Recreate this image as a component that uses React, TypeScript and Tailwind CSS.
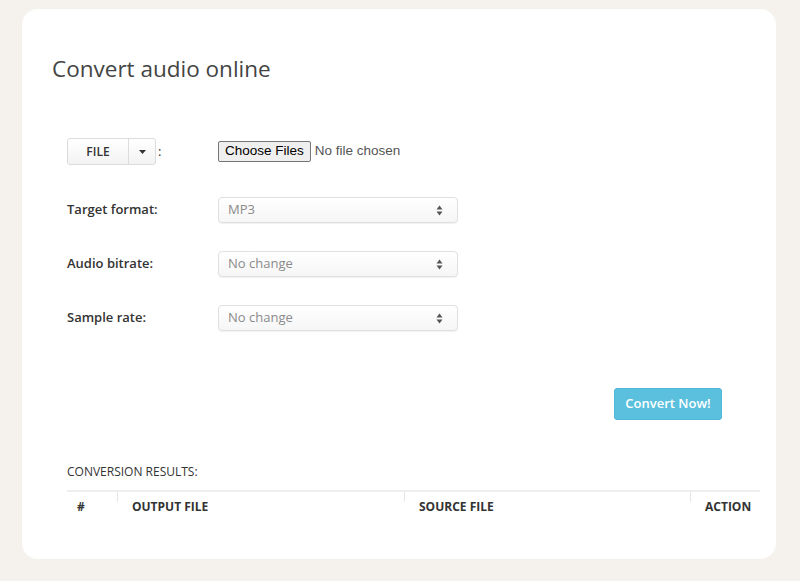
const rows = [
  { label: 'Target format:', value: 'MP3' },
  { label: 'Audio bitrate:', value: 'No change' },
  { label: 'Sample rate:', value: 'No change' },
];

function UpDown() {
  return (
    <svg width="7" height="11" viewBox="0 0 7 11" className="text-[#555]">
      <path d="M0.5 4.5 L3.5 0.5 L6.5 4.5 Z" fill="currentColor" />
      <path d="M0.5 6.5 L3.5 10.5 L6.5 6.5 Z" fill="currentColor" />
    </svg>
  );
}

export default function App() {
  return (
    <div className="min-h-[581px] w-[800px] bg-[#f5f2ee] pt-[9px] font-['Open_Sans',sans-serif]">
      <div className="ml-[22px] h-[550px] w-[754px] rounded-[16px] bg-white pt-[45px]">
        {/* Title */}
        <h1 className="pl-[30px] text-[22.5px] leading-[30px] text-[#444]">Convert audio online</h1>

        <div className="mt-[54px] pl-[45px] pr-[16px]">
          {/* File source row */}
          <div className="flex h-[27px] items-center">
            <div className="flex w-[151px] items-center">
              <div className="flex h-[27px] items-stretch rounded-[3px] border border-[#dcdcdc] bg-gradient-to-b from-white to-[#f3f3f3]">
                <span className="flex w-[60px] items-center justify-center text-[12px] font-semibold text-[#333]">FILE</span>
                <span className="flex w-[27px] items-center justify-center border-l border-[#dcdcdc]">
                  <svg width="7" height="4" viewBox="0 0 7 4">
                    <path d="M0 0 L7 0 L3.5 4 Z" fill="#333" />
                  </svg>
                </span>
              </div>
              <span className="ml-[2px] text-[13px] text-[#333]">:</span>
            </div>
            <div className="flex items-center font-['Liberation_Sans',sans-serif]">
              <span className="flex h-[21px] items-center rounded-[2px] border border-[#767676] bg-[#efefef] px-[6px] text-[13.5px] text-black">
                Choose Files
              </span>
              <span className="ml-[4px] text-[13.5px] text-[#555]">No file chosen</span>
            </div>
          </div>

          {/* Options */}
          <div className="mt-[32px] flex flex-col gap-[28px]">
            {rows.map((r) => (
              <div key={r.label} className="flex h-[26px] items-center">
                <span className="w-[151px] text-[13px] font-semibold text-[#333]">{r.label}</span>
                <div className="flex h-[26px] w-[240px] items-center justify-between rounded-[4px] border border-[#e0e0e0] bg-gradient-to-b from-white to-[#f6f6f6] pl-[9px] pr-[14px] shadow-[0_1px_1px_rgba(0,0,0,0.06)]">
                  <span className="text-[13px] text-[#8a8a8a]">{r.value}</span>
                  <UpDown />
                </div>
              </div>
            ))}
          </div>

          {/* Convert */}
          <div className="mt-[57px] flex justify-end pr-[38px]">
            <button className="h-[32px] w-[108px] rounded-[3px] border border-[#4fb8d8] bg-[#5bc0de] text-[13px] font-semibold text-white">
              Convert Now!
            </button>
          </div>

          {/* Results */}
          <div className="mt-[43px] text-[12px] leading-[17px] text-[#333]">CONVERSION RESULTS:</div>
          <div className="mt-[10px] flex border-t-2 border-[#eeeeee] pt-[6px] text-[12px] font-bold leading-[17px] text-[#333]">
            <div className="w-[50px] pl-[10px]">#</div>
            <div className="relative w-[287px] pl-[15px]">
              <span className="absolute left-0 top-[-6px] h-[10px] border-l border-[#e6e6e6]" />
              OUTPUT FILE
            </div>
            <div className="relative w-[286px] pl-[15px]">
              <span className="absolute left-0 top-[-6px] h-[10px] border-l border-[#e6e6e6]" />
              SOURCE FILE
            </div>
            <div className="relative flex-1 pl-[15px]">
              <span className="absolute left-0 top-[-6px] h-[10px] border-l border-[#e6e6e6]" />
              ACTION
            </div>
          </div>
        </div>
      </div>
    </div>
  );
}
